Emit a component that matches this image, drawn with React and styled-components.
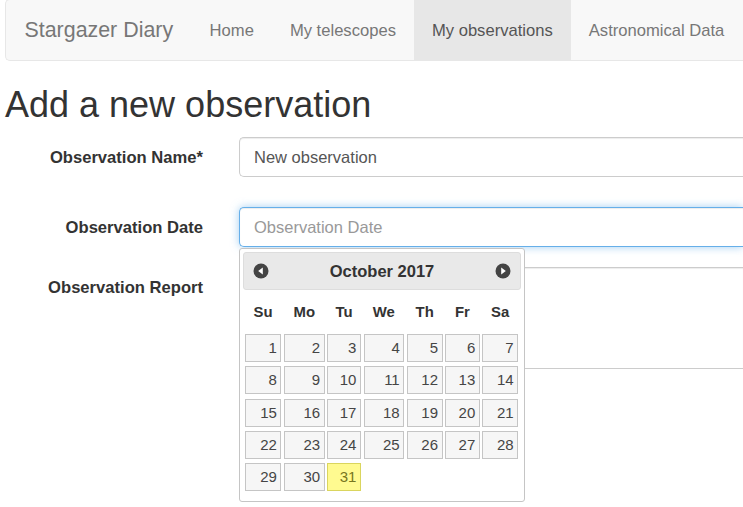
import React from "react";
import styled, { createGlobalStyle, css } from "styled-components";

const GlobalStyle = createGlobalStyle`
	html {
		overflow: hidden;
	}

	html, body {
		margin: 0;
		padding: 0;
		background: #ffffff;
	}

	body {
		min-height: 100vh;
		font-family: "Liberation Sans", Arial, Helvetica, sans-serif;
		color: #333333;
	}

	* {
		box-sizing: border-box;
	}
`;

const NAV_ITEMS = ["Home", "My telescopes", "My observations", "Astronomical Data"];
const WEEKDAYS = ["Su", "Mo", "Tu", "We", "Th", "Fr", "Sa"];
const DAYS = Array.from({ length: 31 }, (_, i) => i + 1);

function ArrowIcon({ direction }) {
	const points = direction === "prev" ? "9.8,4.6 5.2,8 9.8,11.4" : "6.2,4.6 10.8,8 6.2,11.4";
	return (
		<svg width="16" height="16" viewBox="0 0 16 16" aria-hidden="true">
			<circle cx="8" cy="8" r="7.5" fill="#444444" />
			<polygon points={points} fill="#ffffff" />
		</svg>
	);
}

function Datepicker() {
	return (
		<PickerWrapper>
			<PickerHeader>
				<ArrowButton>
					<ArrowIcon direction="prev" />
				</ArrowButton>
				<PickerTitle>October 2017</PickerTitle>
				<ArrowButton>
					<ArrowIcon direction="next" />
				</ArrowButton>
			</PickerHeader>
			<WeekdayRow>
				{WEEKDAYS.map((d) => (
					<Weekday key={d}>{d}</Weekday>
				))}
			</WeekdayRow>
			<DayGrid>
				{DAYS.map((d) => (
					<DayCell key={d} $today={d === 31}>
						{d}
					</DayCell>
				))}
			</DayGrid>
		</PickerWrapper>
	);
}

function App() {
	return (
		<>
			<GlobalStyle />
			<Page>
				<Navbar>
					<Brand>Stargazer Diary</Brand>
					<NavList>
						{NAV_ITEMS.map((item) => (
							<NavLink key={item} $active={item === "My observations"}>
								{item}
							</NavLink>
						))}
					</NavList>
				</Navbar>

				<Title>Add a new observation</Title>

				<Form>
					<FormGroup $spacing={30}>
						<Label>Observation Name*</Label>
						<Field>
							<TextInput defaultValue="New observation" />
						</Field>
					</FormGroup>
					<FormGroup $spacing={20}>
						<Label>Observation Date</Label>
						<Field>
							<TextInput $focused placeholder="Observation Date" />
							<Datepicker />
						</Field>
					</FormGroup>
					<FormGroup $spacing={0}>
						<Label>Observation Report</Label>
						<Field>
							<TextArea />
						</Field>
					</FormGroup>
				</Form>
			</Page>
		</>
	);
}

export default App;

const Page = styled.div`
	width: 100%;
	padding-left: 5px;
`;

const Navbar = styled.nav`
	margin-top: -1px;
	height: 62px;
	display: flex;
	align-items: stretch;
	overflow: hidden;
	background-color: #f8f8f8;
	border: 1px solid #e7e7e7;
	border-right: 0;
	border-radius: 5px 0 0 5px;
`;

const Brand = styled.a`
	padding: 0 18.5px;
	line-height: 61px;
	font-size: 21.4px;
	color: #777777;
	text-decoration: none;
	white-space: nowrap;
`;

const NavList = styled.ul`
	display: flex;
	margin: 0;
	padding: 0;
	list-style: none;
`;

const NavLink = styled.li`
	padding: 0 18px;
	line-height: 61px;
	font-size: 16.6px;
	color: #777777;
	white-space: nowrap;

	${(p) =>
		p.$active &&
		css`
			background-color: #e7e7e7;
			color: #555555;
		`}
`;

const Title = styled.h1`
	margin: 23.5px 0 0;
	font-size: 36px;
	line-height: 1.1;
	font-weight: 400;
	color: #333333;
`;

const Form = styled.form`
	margin-top: 13px;
`;

const FormGroup = styled.div`
	display: grid;
	grid-template-columns: 198px 1fr;
	column-gap: 36px;
	margin-bottom: ${(p) => p.$spacing}px;
`;

const Label = styled.label`
	padding-top: 9px;
	line-height: 23.6px;
	font-size: 16.6px;
	font-weight: 700;
	text-align: right;
	color: #333333;
	white-space: nowrap;
`;

const Field = styled.div`
	position: relative;
`;

const inputBase = css`
	display: block;
	width: 100%;
	border: 1px solid #cccccc;
	border-right: 0;
	border-radius: 5px 0 0 5px;
	background: #ffffff;
	font-family: "Liberation Sans", Arial, sans-serif;
	font-size: 16.5px;
	color: #555555;
	box-shadow: inset 0 1px 1px rgba(0, 0, 0, 0.075);
	outline: none;
`;

const TextInput = styled.input`
	${inputBase};
	height: 40px;
	padding: 0 14px;

	&::placeholder {
		color: #999999;
	}

	${(p) =>
		p.$focused &&
		css`
			border-color: #66afe9;
			box-shadow: inset 0 1px 1px rgba(0, 0, 0, 0.075), 0 0 8px rgba(102, 175, 233, 0.6);
		`}
`;

const TextArea = styled.textarea`
	${inputBase};
	height: 102px;
	padding: 8px 14px;
	resize: none;
`;

/* jQuery UI style datepicker popup */
const PickerWrapper = styled.div`
	position: absolute;
	top: calc(100% + 1px);
	left: 0;
	z-index: 5;
	width: 286px;
	padding: 3px;
	background: #ffffff;
	border: 1px solid #c5c5c5;
	border-radius: 3px;
	font-family: "Liberation Sans", Arial, sans-serif;
`;

const PickerHeader = styled.div`
	height: 38px;
	display: flex;
	align-items: center;
	justify-content: space-between;
	padding: 0 9px;
	background: #e9e9e9;
	border: 1px solid #dddddd;
	border-radius: 3px;
`;

const ArrowButton = styled.span`
	display: flex;
	width: 16px;
	height: 16px;
`;

const PickerTitle = styled.span`
	font-size: 16.5px;
	font-weight: 700;
	color: #333333;
`;

const calendarColumns = css`
	display: grid;
	grid-template-columns: 36.7px 40.7px 33.7px 40.7px 35.7px 34.7px 35.7px;
	column-gap: 2.6px;
	padding-left: 1.7px;
`;

const WeekdayRow = styled.div`
	${calendarColumns};
	margin-top: 1px;
	height: 41px;
	align-items: center;
`;

const Weekday = styled.span`
	text-align: center;
	font-size: 14.9px;
	font-weight: 700;
	color: #333333;
`;

const DayGrid = styled.div`
	${calendarColumns};
	grid-auto-rows: 28px;
	row-gap: 4.4px;
	padding-top: 1.7px;
	margin-bottom: 7px;
`;

const DayCell = styled.span`
	padding-right: 3.5px;
	line-height: 26px;
	font-size: 15px;
	text-align: right;
	color: #454545;
	background: #f6f6f6;
	border: 1px solid #c5c5c5;

	${(p) =>
		p.$today &&
		css`
			background: #fffa90;
			border-color: #dad55e;
			color: #777620;
		`}
`;
